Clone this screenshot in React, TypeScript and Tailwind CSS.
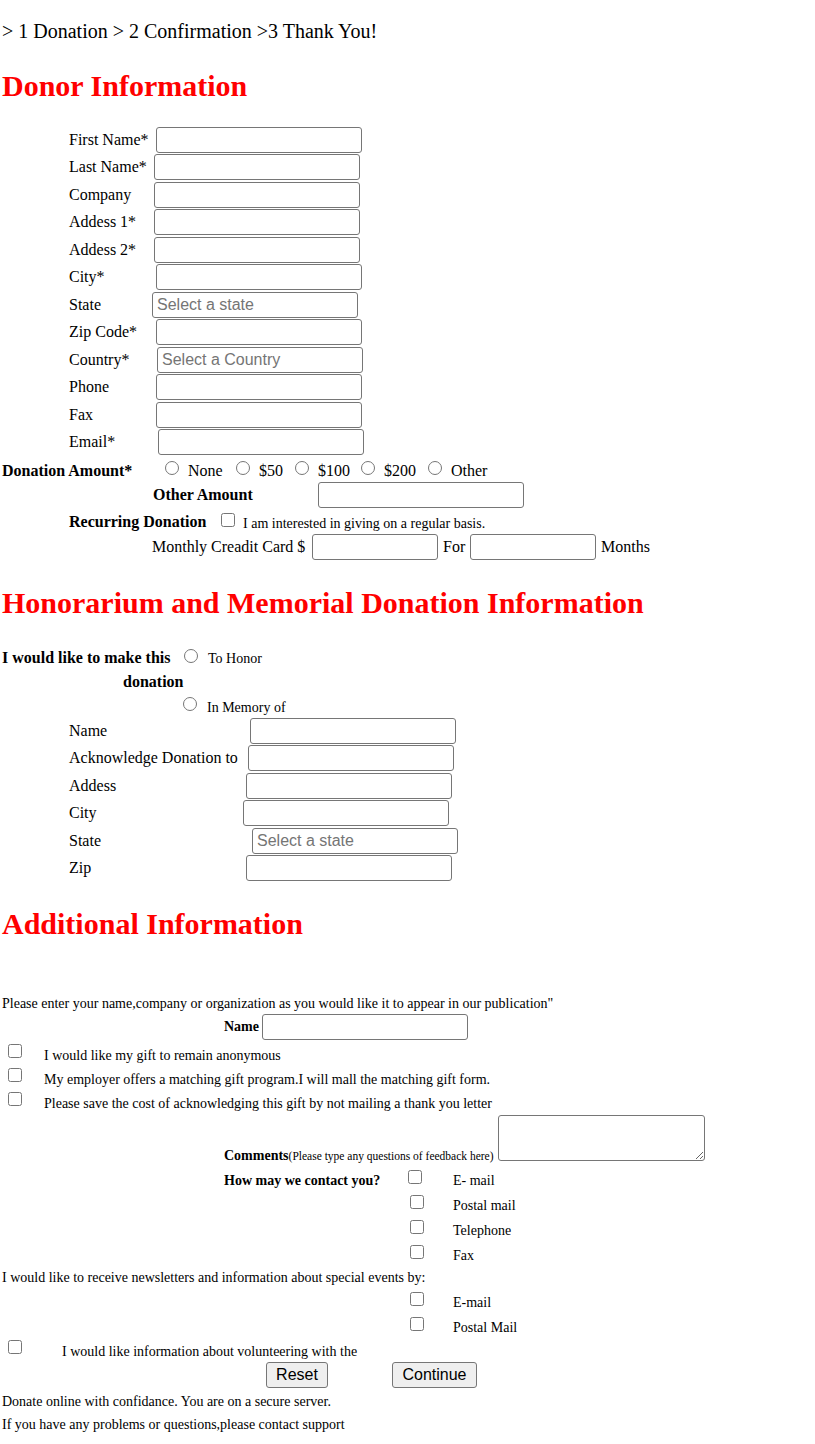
import { ReactNode } from "react";

const inputCls = "block h-[26px] border border-[#767676] rounded-[3px] bg-white px-[4px] text-[16px] outline-none placeholder:text-[#757575] font-['Liberation_Sans',Arial,sans-serif]";
const boxCls = "block m-0 w-[14px] h-[14px] shrink-0";
const headingCls = "h-[34px] leading-[34px] text-[30px] font-bold text-[#ff0000]";

const donorRows = [
    { label: "First Name*", pad: "w-[87px]" },
    { label: "Last Name*", pad: "w-[85px]" },
    { label: "Company", pad: "w-[85px]" },
    { label: "Addess 1*", pad: "w-[85px]" },
    { label: "Addess 2*", pad: "w-[85px]" },
    { label: "City*", pad: "w-[87px]" },
    { label: "State", pad: "w-[83px]", placeholder: "Select a state" },
    { label: "Zip Code*", pad: "w-[87px]" },
    { label: "Country*", pad: "w-[88px]", placeholder: "Select a Country" },
    { label: "Phone", pad: "w-[87px]" },
    { label: "Fax", pad: "w-[87px]" },
    { label: "Email*", pad: "w-[89px]" },
];

const honorRows = [
    { label: "Name", pad: "w-[181px]" },
    { label: "Acknowledge Donation to", pad: "w-[179px]" },
    { label: "Addess", pad: "w-[177px]" },
    { label: "City", pad: "w-[174px]" },
    { label: "State", pad: "w-[183px]", placeholder: "Select a state" },
    { label: "Zip", pad: "w-[177px]" },
];

const amounts = [
    { text: "None", w: "w-[48px]" },
    { text: "$50", w: "w-[36px]" },
    { text: "$100", w: "w-[43px]" },
    { text: "$200", w: "w-[44px]" },
    { text: "Other", w: "w-[50px]" },
];

function FieldRow({ label, pad, placeholder }: { label: string, pad: string, placeholder?: string }) {
    return (
        <div className="flex items-center h-[27.5px] pl-[69px]">
            <span className={`${pad} shrink-0 whitespace-nowrap`}>{label}</span>
            <input className={`${inputCls} w-[206px]`} placeholder={placeholder} />
        </div>
    );
}

function CheckRow({ children, box, h = "h-[25px]" }: { children: ReactNode, box: string, h?: string }) {
    return (
        <div className={`flex items-center ${h}`}>
            <span className={`${box} shrink-0`}>
                <input type="checkbox" className={`${boxCls} mb-[8px]`} />
            </span>
            <span className="text-[14px] whitespace-nowrap">{children}</span>
        </div>
    );
}

export default function App() {
    return (
        <div className="font-['Liberation_Serif','Times_New_Roman',serif] text-[16px] text-black bg-white w-[815px] min-h-[1444px] pb-[10px]">
            <div className="pt-[20px] pl-[2px] h-[43px] leading-[23px] text-[20px]">
                &gt; 1 Donation &gt; 2 Confirmation &gt;3 Thank You!
            </div>

            <h2 className={`${headingCls} mt-[26px] pl-[2px]`}>Donor Information</h2>

            <div className="mt-[23px]">
                {donorRows.map((row, index) => (
                    <FieldRow key={index} {...row} />
                ))}
            </div>

            <div className="flex items-center h-[22px] mt-[4px] pl-[2px]">
                <span className="w-[163px] shrink-0 font-bold">Donation Amount*</span>
                {amounts.map((amount, index) => (
                    <label key={index} className="flex items-center">
                        <input type="radio" name="amount" className={`${boxCls} mb-[6px] mr-[9px]`} />
                        <span className={`${amount.w} shrink-0`}>{amount.text}</span>
                    </label>
                ))}
            </div>

            <div className="flex items-center h-[26px] pl-[153px]">
                <span className="w-[165px] shrink-0 font-bold">Other Amount</span>
                <input className={`${inputCls} w-[206px]`} />
            </div>

            <div className="flex items-center h-[20px] mt-[4px] pl-[69px]">
                <span className="w-[152px] shrink-0 font-bold">Recurring Donation</span>
                <input type="checkbox" className={`${boxCls} mb-[4px]`} />
                <span className="ml-[8px] text-[14px] mt-[2px]">I am interested in giving on a regular basis.</span>
            </div>

            <div className="flex items-center h-[26px] mt-[2px] pl-[152px]">
                <span className="w-[160px] shrink-0 whitespace-nowrap">Monthly Creadit Card $</span>
                <input className={`${inputCls} w-[126px]`} />
                <span className="w-[32px] shrink-0 pl-[5px]">For</span>
                <input className={`${inputCls} w-[126px]`} />
                <span className="ml-[5px]">Months</span>
            </div>

            <h2 className={`${headingCls} mt-[26px] pl-[2px]`}>Honorarium and Memorial Donation Information</h2>

            <div className="flex items-center h-[20px] mt-[28px] pl-[2px]">
                <span className="w-[182px] shrink-0 font-bold whitespace-nowrap">I would like to make this</span>
                <input type="radio" name="honor" className={`${boxCls} mb-[4px]`} />
                <span className="ml-[10px] text-[14px]">To Honor</span>
            </div>
            <div className="h-[20px] leading-[20px] mt-[4px] pl-[123px] font-bold">donation</div>
            <div className="flex items-center h-[20px] mt-[5px] pl-[183px]">
                <input type="radio" name="honor" className={`${boxCls} mb-[6px]`} />
                <span className="ml-[10px] text-[14px]">In Memory of</span>
            </div>

            <div>
                {honorRows.map((row, index) => (
                    <FieldRow key={index} {...row} />
                ))}
            </div>

            <h2 className={`${headingCls} mt-[25px] pl-[2px]`}>Additional Information</h2>

            <div className="mt-[55px] pl-[2px] h-[16px] leading-[16px] text-[14px] whitespace-nowrap">
                Please enter your name,company or organization as you would like it to appear in our publication"
            </div>

            <div className="flex items-center h-[27px] mt-[1px] pl-[224px]">
                <span className="w-[38px] shrink-0 font-bold text-[14px]">Name</span>
                <input className={`${inputCls} w-[206px]`} />
            </div>

            <div className="mt-[3px] pl-[8px]">
                <CheckRow box="w-[36px]" h="h-[24px]">I would like my gift to remain anonymous</CheckRow>
                <CheckRow box="w-[36px]" h="h-[24px]">My employer offers a matching gift program.I will mall the matching gift form.</CheckRow>
                <CheckRow box="w-[36px]" h="h-[24px]">Please save the cost of acknowledging this gift by not mailing a thank you letter</CheckRow>
            </div>

            <div className="flex items-end pl-[224px]">
                <span className="w-[274px] shrink-0 whitespace-nowrap leading-[16px]">
                    <span className="font-bold text-[14px]">Comments</span>
                    <span className="text-[11.5px]">(Please type any questions of feedback here)</span>
                </span>
                <textarea className="block w-[207px] h-[46px] mb-[3px] border border-[#767676] rounded-[3px] resize-y outline-none" />
            </div>

            <div className="mt-[4px]">
                <div className="flex items-center h-[25px] pl-[224px]">
                    <span className="w-[184px] shrink-0 font-bold text-[14px]">How may we contact you?</span>
                    <span className="w-[45px] shrink-0">
                        <input type="checkbox" className={`${boxCls} mb-[8px]`} />
                    </span>
                    <span className="text-[14px]">E- mail</span>
                </div>
                <div className="pl-[410px]">
                    <CheckRow box="w-[43px]">Postal mail</CheckRow>
                    <CheckRow box="w-[43px]">Telephone</CheckRow>
                    <CheckRow box="w-[43px]">Fax</CheckRow>
                </div>
            </div>

            <div className="mt-[2px] pl-[2px] h-[16px] leading-[16px] text-[14px] whitespace-nowrap">
                I would like to receive newsletters and information about special events by:
            </div>

            <div className="mt-[4px] pl-[410px]">
                <CheckRow box="w-[43px]">E-mail</CheckRow>
                <CheckRow box="w-[43px]">Postal Mail</CheckRow>
            </div>

            <div className="mt-[1px] pl-[8px]">
                <CheckRow box="w-[54px]" h="h-[20px]">I would like information about volunteering with the</CheckRow>
            </div>

            <div className="flex items-center h-[26px] mt-[1px] pl-[266px] font-['Liberation_Sans',Arial,sans-serif]">
                <button type="reset" className="w-[62px] h-[26px] border border-[#767676] rounded-[3px] bg-[#efefef] text-[16px]">
                    Reset
                </button>
                <button type="submit" className="ml-[64px] w-[85px] h-[26px] border border-[#767676] rounded-[3px] bg-[#efefef] text-[16px]">
                    Continue
                </button>
            </div>

            <div className="mt-[6px] pl-[2px] h-[16px] leading-[16px] text-[14px]">
                Donate online with confidance. You are on a secure server.
            </div>
            <div className="mt-[7px] pl-[2px] h-[16px] leading-[16px] text-[14px]">
                If you have any problems or questions,please contact support
            </div>
        </div>
    );
}
